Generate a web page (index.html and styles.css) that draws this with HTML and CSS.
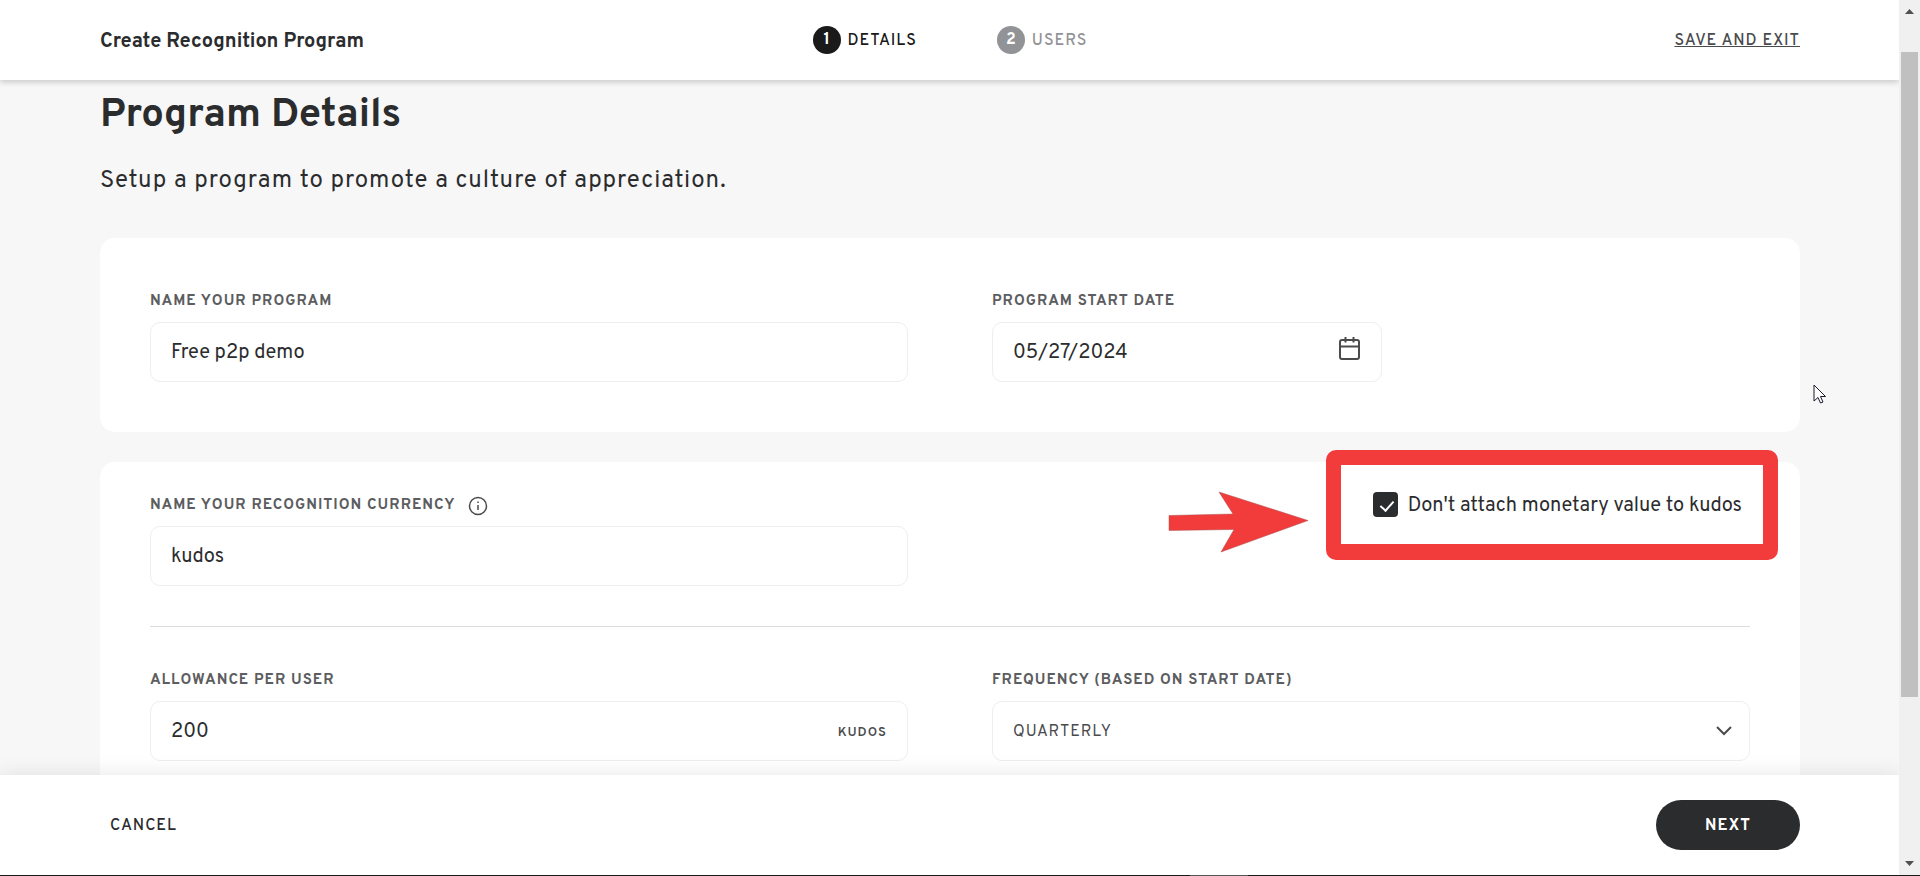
FILE: index.html
```html
<!DOCTYPE html>
<html lang="en">
<head>
    <meta charset="UTF-8">
    <meta name="viewport" content="width=device-width, initial-scale=1.0">
    <title>Create Recognition Program</title>
    <link rel="stylesheet" href="styles.css">
</head>
<body>
    <div class="window">
        <div class="app">
            <header class="topbar">
                <div class="topbar-title">Create Recognition Program</div>
                <ol class="steps">
                    <li class="step active"><span class="step-num">1</span><span class="step-name">DETAILS</span></li>
                    <li class="step"><span class="step-num">2</span><span class="step-name">USERS</span></li>
                </ol>
                <a href="#" class="save-link">SAVE AND EXIT</a>
            </header>

            <main>
                <h1>Program Details</h1>
                <p class="subtitle">Setup a program to promote a culture of appreciation.</p>

                <section class="card">
                    <div class="row">
                        <div class="field">
                            <label for="programName">NAME YOUR PROGRAM</label>
                            <div class="control"><input type="text" id="programName" value="Free p2p demo"></div>
                        </div>
                        <div class="field">
                            <label for="startDate">PROGRAM START DATE</label>
                            <div class="control control-date">
                                <input type="text" id="startDate" value="05/27/2024">
                                <svg class="calendar" width="24" height="24" viewBox="0 0 24 24" fill="none" stroke="#4a4b4d" stroke-width="2">
                                    <rect x="3" y="3" width="19" height="19" rx="2"/>
                                    <path d="M3 9.500h19M8.500 0v5.500M16.500 0v5.500"/>
                                </svg>
                            </div>
                        </div>
                    </div>
                    <svg class="cursor" width="14" height="21" viewBox="0 0 14 21">
                        <path d="M1 1v16l4-3.500 2.500 5.500 2.500-1-2.500-5.500h5z" fill="#fff" stroke="#1b1b2b" stroke-width="1"/>
                    </svg>
                </section>

                <section class="card card-currency">
                    <div class="row">
                        <div class="field">
                            <div class="label-line">
                                <label for="currencyName">NAME YOUR RECOGNITION CURRENCY</label>
                                <svg width="20" height="20" viewBox="0 0 20 20" fill="none" stroke="#4a4b4d">
                                    <circle cx="10" cy="10" r="8.500" stroke-width="1.500"/>
                                    <path d="M10 9v5M10 5.500v1.500" stroke-width="1.500"/>
                                </svg>
                            </div>
                            <div class="control"><input type="text" id="currencyName" value="kudos"></div>
                        </div>
                        <label class="check">
                            <input type="checkbox" checked>
                            <span>Don't attach monetary value to kudos</span>
                        </label>
                    </div>
                    <hr>
                    <div class="row">
                        <div class="field">
                            <label for="allowance">ALLOWANCE PER USER</label>
                            <div class="control">
                                <input type="text" id="allowance" value="200">
                                <span class="unit">KUDOS</span>
                            </div>
                        </div>
                        <div class="field">
                            <label for="frequency">FREQUENCY (BASED ON START DATE)</label>
                            <div class="control">
                                <select id="frequency">
                                    <option>MONTHLY</option>
                                    <option selected>QUARTERLY</option>
                                    <option>YEARLY</option>
                                </select>
                                <svg class="chevron" width="16" height="10" viewBox="0 0 16 10" fill="none" stroke="#4a4b4d" stroke-width="2">
                                    <path d="M1 1l7 7 7-7"/>
                                </svg>
                            </div>
                        </div>
                    </div>

                    <!-- callout drawn over the checkbox -->
                    <div class="callout-box"></div>
                    <svg class="callout-arrow" width="142" height="62" viewBox="0 0 142 62">
                        <path d="M1 24.500L65 23 51 1l89 28.500L53 61l13-22.500L1 39.500z" fill="#f23c3c" stroke="#a85050" stroke-width="0.500"/>
                    </svg>
                </section>
            </main>

            <footer class="actions">
                <button type="button" class="cancel-btn">CANCEL</button>
                <button type="button" class="next-btn">NEXT</button>
            </footer>
        </div>

        <div class="scrollbar">
            <svg width="9" height="5" viewBox="0 0 9 5"><path d="M0 5L4.500 0 9 5z" fill="#505050"/></svg>
            <div class="track"><div class="thumb"></div></div>
            <svg width="9" height="5" viewBox="0 0 9 5"><path d="M0 0h9L4.500 5z" fill="#505050"/></svg>
        </div>
    </div>
    <div class="edge"></div>
</body>
</html>
```

FILE: styles.css
```css
* {
    box-sizing: border-box;
}

body {
    font-family: Overpass, Roboto, sans-serif;
    font-size: 20px;
    color: #2b2c2e;
    background-color: #f7f7f7;
    margin: 0;
    height: 100vh;
    display: flex;
    flex-direction: column;
    overflow: hidden;
}

input,
select,
button {
    font-family: inherit;
    color: inherit;
}

.window {
    flex: 1;
    display: flex;
    min-height: 0;
}

.app {
    flex: 1;
    display: flex;
    flex-direction: column;
    min-width: 0;
    overflow: hidden;
}

/* top bar */
.topbar {
    flex: none;
    position: relative;
    z-index: 2;
    height: 80px;
    padding: 0 99px 0 100px;
    display: grid;
    grid-template-columns: 1fr auto 1fr;
    align-items: center;
    background-color: #ffffff;
    box-shadow: 0 2px 6px rgba(0, 0, 0, 0.2);
}

.topbar-title {
    padding-top: 4px;
    font-weight: bold;
}

.steps {
    display: flex;
    gap: 80px;
    margin: 0;
    padding: 0;
    list-style: none;
}

.step {
    display: flex;
    align-items: center;
    gap: 7px;
    font-size: 16px;
    font-weight: 500;
    letter-spacing: 1px;
    color: #929396;
}

.step-name {
    padding-top: 2px;
}

.step-num {
    width: 28px;
    height: 28px;
    border-radius: 50%;
    line-height: 28px;
    text-align: center;
    font-weight: bold;
    letter-spacing: 0;
    color: #ffffff;
    background-color: #929396;
}

.step.active {
    color: #1a1a1a;
}

.active .step-num {
    background-color: #1a1a1a;
}

.save-link {
    justify-self: end;
    padding-top: 2px;
    font-size: 16px;
    font-weight: 500;
    letter-spacing: 1px;
    color: #4a4b4d;
}

/* page */
main {
    flex: 1;
    min-height: 0;
    overflow: hidden;
    padding: 12px 99px 0 100px;
}

h1 {
    margin: 0;
    font-size: 40px;
    line-height: 48px;
    font-weight: bold;
}

.subtitle {
    margin: 25px 0 41px;
    font-size: 24px;
    line-height: 32px;
    letter-spacing: 1px;
}

.card {
    position: relative;
    padding: 52px 50px 50px;
    margin-bottom: 30px;
    border-radius: 15px;
    background-color: #ffffff;
}

.card-currency {
    padding-top: 32px;
}

.row {
    display: grid;
    grid-template-columns: 1fr 1fr;
    gap: 84px;
}

.field label {
    display: block;
    font-size: 15px;
    line-height: 24px;
    font-weight: bold;
    letter-spacing: 1px;
    color: #5c5d60;
}

.label-line {
    display: flex;
    align-items: center;
    gap: 12px;
}

.control {
    display: flex;
    align-items: center;
    height: 60px;
    margin-top: 8px;
    padding: 0 20px;
    border: 1px solid #eeeeee;
    border-radius: 10px;
}

.control-date {
    width: 390px;
}

.control input,
.control select {
    flex: 1;
    min-width: 0;
    height: 58px;
    padding: 2px 0 0;
    border: none;
    outline: none;
    background: none;
    font-size: 20px;
}

.control select {
    appearance: none;
    font-size: 16px;
    letter-spacing: 1px;
    color: #4a4b4d;
}

.calendar {
    margin-bottom: 6px;
}

.chevron {
    margin-right: -3px;
}

.unit {
    padding-top: 4px;
    font-size: 13px;
    font-weight: 600;
    letter-spacing: 1px;
    color: #4a4b4d;
}

.check {
    justify-self: end;
    align-self: start;
    display: flex;
    align-items: center;
    gap: 10px;
    height: 24px;
    margin: -2px 8px 0 0;
}

.check span {
    padding-top: 4px;
}

.check input {
    appearance: none;
    position: relative;
    width: 25px;
    height: 25px;
    margin: 0;
    border-radius: 4px;
    background-color: #2b2c2e;
}

.check input:checked::after {
    content: "";
    position: absolute;
    left: 10px;
    top: 6px;
    width: 6px;
    height: 11px;
    border: solid #ffffff;
    border-width: 0 2px 2px 0;
    transform: rotate(42deg);
}

hr {
    margin: 40px 0 42px;
    border: none;
    border-top: 1px solid #dddddd;
}

/* callout */
.callout-box {
    position: absolute;
    top: -12px;
    right: 22px;
    width: 452px;
    height: 110px;
    border: 15px solid #f23c3c;
    border-bottom-width: 16px;
    border-radius: 10px;
    pointer-events: none;
}

.callout-arrow {
    position: absolute;
    top: 29px;
    right: 490px;
}

.cursor {
    position: absolute;
    right: -27px;
    bottom: 27px;
}

/* bottom bar */
.actions {
    flex: none;
    position: relative;
    z-index: 2;
    height: 100px;
    padding: 0 99px 0 100px;
    display: flex;
    align-items: center;
    justify-content: space-between;
    background-color: #ffffff;
    box-shadow: 0 0 20px rgba(0, 0, 0, 0.1);
}

.actions button {
    height: 50px;
    padding: 2px 10px 0;
    border: none;
    font-size: 16px;
    letter-spacing: 1px;
    cursor: pointer;
}

.cancel-btn {
    background: none;
    font-weight: 500;
}

.actions .next-btn {
    width: 144px;
    border-radius: 25px;
    font-weight: bold;
    color: #ffffff;
    background-color: #2b2c2e;
}

/* scrollbar */
.scrollbar {
    flex: none;
    width: 21px;
    padding: 9px 0;
    display: flex;
    flex-direction: column;
    align-items: center;
    background-color: #f0f0f0;
}

.track {
    flex: 1;
    width: 17px;
    padding: 38px 0 13px;
}

.thumb {
    height: 81%;
    background-color: #c0c0c0;
}

.edge {
    flex: none;
    height: 1px;
    background: linear-gradient(to right, #1a1a1a 62%, #555555 62%, #555555 65%, #1a1a1a 65%);
}
```
